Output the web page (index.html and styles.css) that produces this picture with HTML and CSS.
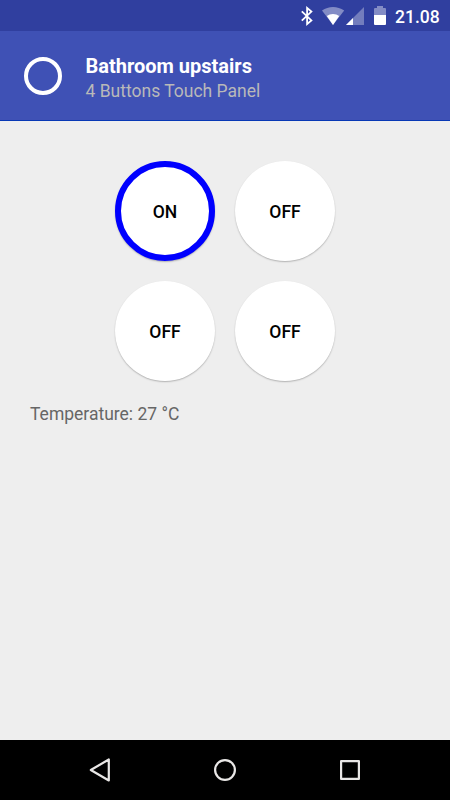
FILE: index.html
```html
<!DOCTYPE html>
<html lang="en">
<head>
<meta charset="utf-8">
<title>Bathroom upstairs</title>
<link rel="stylesheet" href="styles.css">
</head>
<body>
<div class="screen">
  <div class="status">
    <svg class="status-icons" width="90" height="31" viewBox="300 0 90 31">
      <path d="M301.800 11.300L311.400 20.400L307.100 24V8L311.400 11.600L301.800 20.700" fill="none" stroke="#fff" stroke-width="1.800"/>
      <path d="M322 10.600Q327 7 333 7T344.200 10.600L333 25Z" fill="#838cc5"/>
      <path d="M326.800 16Q329.500 14 333 14T339.200 16L333 25Z" fill="#fff"/>
      <path d="M364 7V25H346Z" fill="#737dbd"/>
      <path d="M353 18V25H346Z" fill="#fff"/>
      <path d="M374 15V9Q374 8 375 8H377V6H383V8H385Q386 8 386 9V15Z" fill="#838cc5"/>
      <path d="M374 15H386V24Q386 25 385 25H375Q374 25 374 24Z" fill="#fff"/>
    </svg>
    <span class="clock">21.08</span>
  </div>
  <header class="header">
    <div class="ring"></div>
    <div class="titles">
      <h1 class="title">Bathroom upstairs</h1>
      <p class="subtitle">4 Buttons Touch Panel</p>
    </div>
  </header>
  <main class="content">
    <div class="buttons">
      <button class="touch on">ON</button>
      <button class="touch">OFF</button>
      <button class="touch">OFF</button>
      <button class="touch">OFF</button>
    </div>
    <p class="temperature">Temperature: 27 °C</p>
  </main>
  <nav class="navbar">
    <svg width="450" height="60" viewBox="0 0 450 60" fill="none" stroke="#e9e7e6" stroke-width="2.200" stroke-linejoin="round">
      <path d="M90.800 30L108.800 19.500V40.500Z"/>
      <circle cx="225" cy="30" r="9.900"/>
      <rect x="341.100" y="21.100" width="17.800" height="17.800"/>
    </svg>
  </nav>
</div>
</body>
</html>
```
FILE: styles.css
```css
body {
  margin: 0;
  font-family: Roboto, sans-serif;
}

.screen {
  width: 450px;
  height: 800px;
  display: flex;
  flex-direction: column;
  background: #eee;
  overflow: hidden;
}

.status {
  height: 31px;
  display: flex;
  justify-content: flex-end;
  background: #303f9f;
}

.clock {
  width: 60px;
  padding-left: 5px;
  box-sizing: border-box;
  font-size: 17.5px;
  font-weight: 500;
  line-height: 34px;
  color: #fff;
}

.header {
  height: 90px;
  box-sizing: border-box;
  display: flex;
  align-items: center;
  padding-left: 24px;
  gap: 23.5px;
  background: #3f51b5;
  border-bottom: 1px solid #0838b5;
}

.ring {
  width: 38px;
  height: 38px;
  box-sizing: border-box;
  border: 4px solid #fff;
  border-radius: 50%;
}

.titles {
  padding-top: 6px;
}

.title,
.subtitle {
  margin: 0;
  line-height: 24px;
}

.title {
  font-size: 20px;
  font-weight: 700;
  color: #fff;
}

.subtitle {
  font-size: 17.5px;
  line-height: 26px;
  color: #b9b9b9;
}

.content {
  flex: 1;
  padding-top: 40px;
}

.buttons {
  display: grid;
  grid-template-columns: 100px 100px;
  gap: 20px;
  justify-content: center;
}

.touch {
  width: 100px;
  height: 100px;
  padding: 2px 0 0;
  border: 0 solid #00f;
  border-radius: 50%;
  background: #fff;
  color: #000;
  font: 500 17.5px Roboto, sans-serif;
  box-shadow: 0 1px 1.500px rgba(0, 0, 0, 0.25);
}

.on {
  border-width: 6px;
}

.temperature {
  margin: 21px 0 0 30px;
  font-size: 17.5px;
  line-height: 24px;
  color: #666;
}

.navbar {
  height: 60px;
  background: #000;
}
```
